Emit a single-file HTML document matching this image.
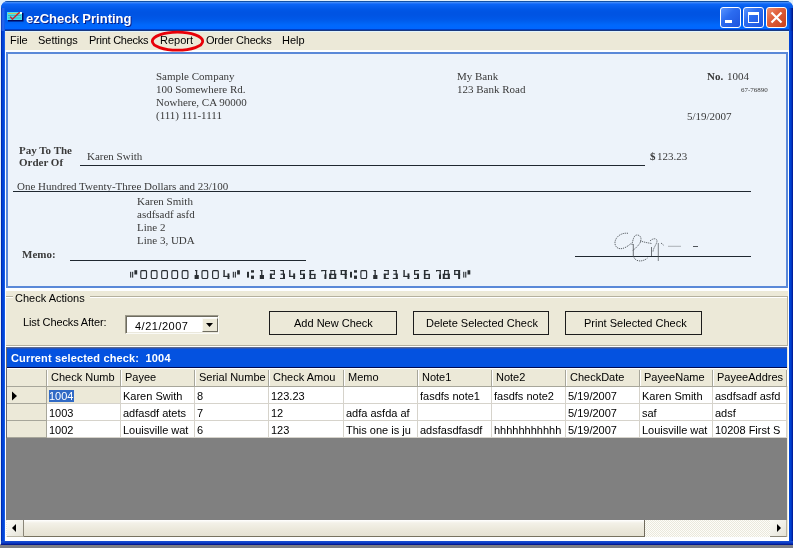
<!DOCTYPE html>
<html><head><meta charset="utf-8"><style>
*{margin:0;padding:0;box-sizing:border-box}
html,body{width:793px;height:548px;overflow:hidden}
body{position:relative;background:#E2F0FA;font-family:"Liberation Sans",sans-serif;font-size:11px;color:#000}
.a{position:absolute}
.t{position:absolute;white-space:pre;line-height:1;will-change:transform}
.sf{font-family:"Liberation Serif",serif;color:#3A3A3A;font-size:11px}
.b{font-weight:bold}
.hd{position:absolute;top:368px;height:18px;background:#ECE9D8}
.btn{position:absolute;top:311px;height:24px;border:1px solid #1C1C1C;background:#ECE9D8}
</style></head><body>
<!-- desktop strip bottom -->
<div class="a" style="left:0;top:545px;width:793px;height:3px;background:#7D7F86"></div>
<div class="a" style="left:0;top:544px;width:793px;height:1px;background:#8C88B0"></div>

<!-- window frame -->
<div class="a" style="left:1px;top:1px;width:792px;height:544px;background:linear-gradient(to right,#00138F 0,#0040D0 1px,#0048DC 3px,#2A6CF4 4px,#0048DC 5px,#0048DC 787px,#0040D0 790px,#00138F 792px);border-radius:7px 7px 0 0"></div>
<div class="a" style="left:1px;top:541px;width:792px;height:4px;background:linear-gradient(to bottom,#1A4ED0 0,#0A3CC8 2px,#000E80 4px)"></div>
<!-- title bar -->
<div class="a" style="left:1px;top:1px;width:792px;height:30px;border-radius:7px 7px 0 0;background:linear-gradient(to bottom,#1050A8 0,#1050A8 1px,#3D8AF8 1px,#3D8AF8 2px,#2070F8 2px,#2070F8 3px,#0A68F8 3px,#0860F0 5px,#0058E8 8px,#0054E3 11px,#0054E3 14px,#0058E8 18px,#0060F0 21px,#0068FC 24px,#0066FF 28px,#0040C8 28px,#0040C8 29px,#1A3A80 29px,#1A3A80 30px)"></div>
<div class="a" style="left:5px;top:31px;width:784px;height:1px;background:#E0F4FF"></div>
<div class="a" style="left:1px;top:8px;width:4px;height:23px;background:linear-gradient(to right,#0A2AA0 0,#1E5AE0 1px,#2A6AF0 2px,#0A58E8 4px)"></div>
<div class="a" style="left:789px;top:8px;width:4px;height:23px;background:linear-gradient(to right,#0A50E0 0,#0038C0 2px,#002098 3px,#001480 4px)"></div>
<!-- title icon -->
<svg class="a" style="left:6px;top:11px" width="18" height="11" viewBox="0 0 18 11">
  <rect x="2" y="2" width="15.5" height="8.5" fill="#000A60"/>
  <rect x="1" y="1" width="15" height="8" fill="#48E0EC"/>
  <rect x="2" y="2" width="12" height="1" fill="#C8C060"/>
  <rect x="2" y="4" width="13" height="1" fill="#38B8C0"/>
  <rect x="2" y="6.5" width="13" height="1" fill="#38B8C0"/>
  <rect x="14" y="1" width="2" height="2" fill="#E8FFFF"/>
  <path d="M4.2 5.6 L6.4 8.2 L13.6 1.3" stroke="#C82030" stroke-width="1.4" fill="none"/>
</svg>
<div class="t b" style="left:26px;top:12px;font-size:13px;color:#fff;text-shadow:1px 1px 0 #0A1F8A">ezCheck Printing</div>

<!-- title buttons -->
<div class="a" style="left:720px;top:7px;width:21px;height:21px;border:1px solid #fff;border-radius:3px;background:linear-gradient(135deg,#5A95FF 0,#2C6CF0 40%,#1D54DE 100%)"></div>
<div class="a" style="left:725px;top:20px;width:7px;height:3px;background:#fff"></div>
<div class="a" style="left:743px;top:7px;width:21px;height:21px;border:1px solid #fff;border-radius:3px;background:linear-gradient(135deg,#5A95FF 0,#2C6CF0 40%,#1D54DE 100%)"></div>
<div class="a" style="left:748px;top:12px;width:11px;height:11px;border:1px solid #fff;border-top-width:3px"></div>
<div class="a" style="left:766px;top:7px;width:21px;height:21px;border:1px solid #fff;border-radius:3px;background:linear-gradient(135deg,#F09070 0,#E0603C 40%,#C8401C 100%)"></div>
<svg class="a" style="left:766px;top:7px" width="21" height="21" viewBox="0 0 21 21"><path d="M5.5 5.5 L15.5 15.5 M15.5 5.5 L5.5 15.5" stroke="#fff" stroke-width="2.2"/></svg>

<!-- client area -->
<div class="a" style="left:5px;top:32px;width:784px;height:509px;background:#ECE9D8"></div>
<div class="a" style="left:5px;top:50px;width:784px;height:491px;background:#FDFEFF"></div>
<div class="a" style="left:6px;top:291px;width:782px;height:246px;background:#ECE9D8"></div>
<!-- menu -->
<div class="t" style="left:10px;top:35px">File</div>
<div class="t" style="left:38px;top:35px">Settings</div>
<div class="t" style="left:89px;top:35px;letter-spacing:-0.25px">Print Checks</div>
<div class="t" style="left:160px;top:35px">Report</div>
<div class="t" style="left:206px;top:35px;letter-spacing:-0.2px">Order Checks</div>
<div class="t" style="left:282px;top:35px">Help</div>
<svg class="a" style="left:150px;top:30px" width="56" height="22" viewBox="0 0 56 22"><ellipse cx="27.5" cy="11.2" rx="25.2" ry="9" fill="none" stroke="#E80008" stroke-width="2.8"/></svg>

<!-- check panel -->
<div class="a" style="left:6px;top:52px;width:782px;height:236px;border:2px solid #5A88D8;background:#EDF3FA"></div>
<div class="t sf" style="left:156px;top:71px">Sample Company</div>
<div class="t sf" style="left:156px;top:84px">100 Somewhere Rd.</div>
<div class="t sf" style="left:156px;top:97px">Nowhere, CA 90000</div>
<div class="t sf" style="left:156px;top:110px">(111) 111-1111</div>
<div class="t sf" style="left:457px;top:71px">My Bank</div>
<div class="t sf" style="left:457px;top:84px">123 Bank Road</div>
<div class="t sf b" style="left:707px;top:71px">No.</div>
<div class="t sf" style="left:727px;top:71px">1004</div>
<div class="t sf" style="left:741px;top:87px;font-size:7px">67-76890</div>
<div class="t sf" style="left:687px;top:111px">5/19/2007</div>
<div class="t sf b" style="left:19px;top:145px">Pay To The</div>
<div class="t sf b" style="left:19px;top:157px">Order Of</div>
<div class="t sf" style="left:87px;top:151px">Karen Swith</div>
<div class="a" style="left:80px;top:165px;width:565px;height:1px;background:#202830"></div>
<div class="t sf b" style="left:650px;top:151px">$</div>
<div class="t sf" style="left:656.5px;top:151px">123.23</div>
<div class="t sf" style="left:17px;top:181px">One Hundred Twenty-Three Dollars and 23/100</div>
<div class="a" style="left:13px;top:191px;width:738px;height:1px;background:#202830"></div>
<div class="t sf" style="left:137px;top:196px">Karen Smith</div>
<div class="t sf" style="left:137px;top:209px">asdfsadf asfd</div>
<div class="t sf" style="left:137px;top:222px">Line 2</div>
<div class="t sf" style="left:137px;top:235px">Line 3, UDA</div>
<div class="t sf b" style="left:22px;top:249px">Memo:</div>
<div class="a" style="left:70px;top:260px;width:236px;height:1px;background:#202830"></div>
<div class="a" style="left:575px;top:256px;width:176px;height:1px;background:#202830"></div>

<!-- sig --><svg class="a" style="left:600px;top:225px" width="110" height="40" viewBox="600 225 110 40"><g fill="none" stroke="#4A4F55" stroke-width="0.9" stroke-dasharray="1.2 0.9">
<path d="M628,233.3 C622,232.5 616,236 615,242 C614.5,247.5 619,250 624,248 C628,246.5 630,244 632,243"/>
<path d="M632,245 C633,239 634,235 637,235 C641,235 642,239 640,243 C638,246 635,249 632.5,250.5"/>
<path d="M633.3,244 L633.3,257" stroke-dasharray="none" stroke-width="0.8"/>
<path d="M640,241 L646,242.5 L651.5,243.5"/>
<path d="M650,241 C653,238 657,238 657,241 C657,244 653,248 653,252"/>
<path d="M651.5,247 L651.5,256" stroke-dasharray="none" stroke-width="0.8"/>
<path d="M634,257.5 C636,262 643,262 647.5,258"/>
<path d="M658.3,243 L658.3,261" stroke-dasharray="none" stroke-width="0.7"/>
<path d="M661,243 L664,245.5"/>
</g>
<path d="M668,246.3 L681,246.3" stroke="#9AA0A6" stroke-width="0.8"/>
<path d="M693,246.5 L698,246.5" stroke="#50555A" stroke-width="1"/>
</svg><!-- /sig -->
<!-- micr --><svg class="a" style="left:125px;top:270px" width="355" height="9" viewBox="0 0 355 9"><g fill="#2A2F33"><rect x="5.1" y="1.8" width="1.1" height="5.8"/><rect x="7.1" y="1.8" width="1.1" height="5.8"/><rect x="9.4" y="0.2" width="2.8" height="4.3"/><rect x="15.8" y="0.55" width="5.7" height="7.9" rx="1.2" fill="none" stroke="#2A2F33" stroke-width="1.15"/><rect x="26.3" y="0.55" width="5.7" height="7.9" rx="1.2" fill="none" stroke="#2A2F33" stroke-width="1.15"/><rect x="36.7" y="0.55" width="5.7" height="7.9" rx="1.2" fill="none" stroke="#2A2F33" stroke-width="1.15"/><rect x="46.9" y="0.55" width="5.7" height="7.9" rx="1.2" fill="none" stroke="#2A2F33" stroke-width="1.15"/><rect x="57.2" y="0.55" width="5.7" height="7.9" rx="1.2" fill="none" stroke="#2A2F33" stroke-width="1.15"/><rect x="70.0" y="0.0" width="2.2" height="1.1"/><rect x="70.9" y="0.0" width="1.3" height="5.5"/><rect x="69.6" y="5.0" width="4.2" height="4.0"/><rect x="77.0" y="0.55" width="5.7" height="7.9" rx="1.2" fill="none" stroke="#2A2F33" stroke-width="1.15"/><rect x="87.6" y="0.55" width="5.7" height="7.9" rx="1.2" fill="none" stroke="#2A2F33" stroke-width="1.15"/><rect x="98.4" y="0.0" width="1.4" height="7.0"/><rect x="98.4" y="5.8" width="6.0" height="1.2"/><rect x="102.5" y="3.4" width="1.9" height="5.6"/><rect x="107.8" y="1.8" width="1.1" height="5.8"/><rect x="109.8" y="1.8" width="1.1" height="5.8"/><rect x="112.1" y="0.2" width="2.8" height="4.3"/><rect x="122.0" y="1.8" width="2.0" height="5.8"/><rect x="126.0" y="0.2" width="3.0" height="2.4"/><rect x="126.0" y="5.6" width="3.0" height="3.3"/><rect x="135.2" y="0.0" width="2.2" height="1.1"/><rect x="136.1" y="0.0" width="1.3" height="5.5"/><rect x="134.8" y="5.0" width="4.2" height="4.0"/><rect x="145.1" y="0.0" width="4.8" height="1.1"/><rect x="148.8" y="0.0" width="1.1" height="4.6"/><rect x="144.9" y="3.7" width="5.0" height="1.2"/><rect x="144.9" y="3.7" width="2.0" height="5.3"/><rect x="144.9" y="7.9" width="5.0" height="1.1"/><rect x="155.3" y="0.0" width="3.7" height="1.1"/><rect x="157.8" y="0.0" width="1.2" height="4.5"/><rect x="155.6" y="3.6" width="3.4" height="1.2"/><rect x="158.0" y="3.6" width="2.0" height="5.4"/><rect x="155.0" y="7.9" width="5.0" height="1.1"/><rect x="164.1" y="0.0" width="1.4" height="7.0"/><rect x="164.1" y="5.8" width="6.0" height="1.2"/><rect x="168.2" y="3.4" width="1.9" height="5.6"/><rect x="175.0" y="0.0" width="5.0" height="1.1"/><rect x="175.0" y="0.0" width="1.2" height="4.6"/><rect x="175.0" y="3.7" width="4.8" height="1.2"/><rect x="178.0" y="3.7" width="2.0" height="5.3"/><rect x="175.0" y="7.9" width="5.0" height="1.1"/><rect x="184.5" y="0.0" width="1.6" height="9.0"/><rect x="184.5" y="0.0" width="4.6" height="1.1"/><rect x="184.5" y="3.9" width="6.0" height="1.2"/><rect x="189.1" y="3.9" width="1.4" height="5.1"/><rect x="184.5" y="7.9" width="6.0" height="1.1"/><rect x="196.4" y="0.0" width="5.0" height="1.1"/><rect x="196.4" y="0.0" width="0.9" height="1.6"/><rect x="200.0" y="0.0" width="1.2" height="5.0"/><rect x="199.4" y="4.4" width="2.0" height="4.6"/><rect x="205.4" y="0.0" width="4.8" height="1.1"/><rect x="205.4" y="0.0" width="1.1" height="4.6"/><rect x="209.1" y="0.0" width="1.1" height="4.6"/><rect x="204.2" y="3.8" width="7.0" height="1.3"/><rect x="204.2" y="3.8" width="2.0" height="5.2"/><rect x="209.2" y="3.8" width="2.0" height="5.2"/><rect x="204.2" y="7.8" width="7.0" height="1.2"/><rect x="215.7" y="0.0" width="6.0" height="1.1"/><rect x="215.7" y="0.0" width="1.3" height="4.8"/><rect x="215.7" y="3.8" width="6.0" height="1.2"/><rect x="219.7" y="0.0" width="2.0" height="9.0"/><rect x="225.0" y="1.8" width="2.0" height="5.8"/><rect x="229.0" y="0.2" width="3.0" height="2.4"/><rect x="229.0" y="5.6" width="3.0" height="3.3"/><rect x="235.9" y="0.55" width="5.7" height="7.9" rx="1.2" fill="none" stroke="#2A2F33" stroke-width="1.15"/><rect x="248.6" y="0.0" width="2.2" height="1.1"/><rect x="249.5" y="0.0" width="1.3" height="5.5"/><rect x="248.2" y="5.0" width="4.2" height="4.0"/><rect x="259.0" y="0.0" width="4.8" height="1.1"/><rect x="262.7" y="0.0" width="1.1" height="4.6"/><rect x="258.8" y="3.7" width="5.0" height="1.2"/><rect x="258.8" y="3.7" width="2.0" height="5.3"/><rect x="258.8" y="7.9" width="5.0" height="1.1"/><rect x="268.1" y="0.0" width="3.7" height="1.1"/><rect x="270.6" y="0.0" width="1.2" height="4.5"/><rect x="268.4" y="3.6" width="3.4" height="1.2"/><rect x="270.8" y="3.6" width="2.0" height="5.4"/><rect x="267.8" y="7.9" width="5.0" height="1.1"/><rect x="278.4" y="0.0" width="1.4" height="7.0"/><rect x="278.4" y="5.8" width="6.0" height="1.2"/><rect x="282.5" y="3.4" width="1.9" height="5.6"/><rect x="289.0" y="0.0" width="5.0" height="1.1"/><rect x="289.0" y="0.0" width="1.2" height="4.6"/><rect x="289.0" y="3.7" width="4.8" height="1.2"/><rect x="292.0" y="3.7" width="2.0" height="5.3"/><rect x="289.0" y="7.9" width="5.0" height="1.1"/><rect x="298.9" y="0.0" width="1.6" height="9.0"/><rect x="298.9" y="0.0" width="4.6" height="1.1"/><rect x="298.9" y="3.9" width="6.0" height="1.2"/><rect x="303.5" y="3.9" width="1.4" height="5.1"/><rect x="298.9" y="7.9" width="6.0" height="1.1"/><rect x="311.0" y="0.0" width="5.0" height="1.1"/><rect x="311.0" y="0.0" width="0.9" height="1.6"/><rect x="314.6" y="0.0" width="1.2" height="5.0"/><rect x="314.0" y="4.4" width="2.0" height="4.6"/><rect x="319.0" y="0.0" width="4.8" height="1.1"/><rect x="319.0" y="0.0" width="1.1" height="4.6"/><rect x="322.7" y="0.0" width="1.1" height="4.6"/><rect x="317.8" y="3.8" width="7.0" height="1.3"/><rect x="317.8" y="3.8" width="2.0" height="5.2"/><rect x="322.8" y="3.8" width="2.0" height="5.2"/><rect x="317.8" y="7.8" width="7.0" height="1.2"/><rect x="329.1" y="0.0" width="6.0" height="1.1"/><rect x="329.1" y="0.0" width="1.3" height="4.8"/><rect x="329.1" y="3.8" width="6.0" height="1.2"/><rect x="333.1" y="0.0" width="2.0" height="9.0"/><rect x="338.2" y="1.8" width="1.1" height="5.8"/><rect x="340.2" y="1.8" width="1.1" height="5.8"/><rect x="342.5" y="0.2" width="2.8" height="4.3"/></g></svg><!-- /micr -->
<!-- group -->
<div class="a" style="left:6px;top:296px;width:782px;height:1px;background:#B4B09E"></div>
<div class="a" style="left:6px;top:297px;width:782px;height:1px;background:#fff"></div>
<div class="a" style="left:6px;top:345px;width:782px;height:1px;background:#B4B09E"></div>
<div class="a" style="left:787px;top:296px;width:1px;height:50px;background:#B4B09E"></div>
<div class="a" style="left:6px;top:346px;width:782px;height:1px;background:#fff"></div>
<div class="t" style="left:13px;top:293px;background:#ECE9D8;padding:0 5px 0 2px">Check Actions</div>
<div class="t" style="left:23px;top:317px;letter-spacing:-0.12px">List Checks After:</div>
<div class="a" style="left:125px;top:315px;width:94px;height:19px;background:#fff;border:1px solid;border-color:#9D9A8A #FAFAF6 #FAFAF6 #9D9A8A;box-shadow:inset 1px 1px 0 #6E6C60,inset -1px -1px 0 #EAE8DC"></div>
<div class="t" style="left:135px;top:321px;letter-spacing:0.5px">4/21/2007</div>
<div class="a" style="left:202px;top:318px;width:16px;height:14px;background:#ECE9D8;border:1px solid;border-color:#FAFAF6 #6E6C60 #6E6C60 #FAFAF6"></div>
<svg class="a" style="left:206px;top:323px" width="8" height="5"><path d="M0 0 H7 L3.5 4 Z" fill="#000"/></svg>
<div class="btn" style="left:269px;width:128px"></div>
<div class="t" style="left:294px;top:318px">Add New Check</div>
<div class="btn" style="left:413px;width:136px"></div>
<div class="t" style="left:426px;top:318px">Delete Selected Check</div>
<div class="btn" style="left:565px;width:137px"></div>
<div class="t" style="left:584px;top:318px">Print Selected Check</div>

<!-- caption bar -->
<div class="a" style="left:6px;top:347px;width:781px;height:21px;background:#0452E0;border-top:1px solid #5A6A90;border-left:1px solid #5A6A90;border-bottom:1px solid #000A50;box-shadow:inset 0 1px 0 #2A54B8"></div>
<div class="t b" style="left:11px;top:353px;color:#fff;letter-spacing:0.15px">Current selected check:  1004</div>

<!-- grid -->
<div class="a" style="left:6px;top:368px;width:781px;height:70px;background:#fff"></div>
<div id="grid">
<div class="a" style="left:6px;top:368px;width:781px;height:19px;background:#ECE9D8;border-top:1px solid #fff;border-bottom:1px solid #A7A69A"></div>
<div class="a" style="left:6px;top:387px;width:40px;height:51px;background:#ECE9D8"></div>
<div class="a" style="left:47px;top:387px;width:73px;height:16px;background:#ECE9D8"></div>
<div class="a" style="left:46px;top:370px;width:1px;height:16px;background:#A7A69A"></div>
<div class="a" style="left:47px;top:370px;width:1px;height:16px;background:#fff"></div>
<div class="a" style="left:120px;top:370px;width:1px;height:16px;background:#A7A69A"></div>
<div class="a" style="left:121px;top:370px;width:1px;height:16px;background:#fff"></div>
<div class="a" style="left:194px;top:370px;width:1px;height:16px;background:#A7A69A"></div>
<div class="a" style="left:195px;top:370px;width:1px;height:16px;background:#fff"></div>
<div class="a" style="left:268px;top:370px;width:1px;height:16px;background:#A7A69A"></div>
<div class="a" style="left:269px;top:370px;width:1px;height:16px;background:#fff"></div>
<div class="a" style="left:343px;top:370px;width:1px;height:16px;background:#A7A69A"></div>
<div class="a" style="left:344px;top:370px;width:1px;height:16px;background:#fff"></div>
<div class="a" style="left:417px;top:370px;width:1px;height:16px;background:#A7A69A"></div>
<div class="a" style="left:418px;top:370px;width:1px;height:16px;background:#fff"></div>
<div class="a" style="left:491px;top:370px;width:1px;height:16px;background:#A7A69A"></div>
<div class="a" style="left:492px;top:370px;width:1px;height:16px;background:#fff"></div>
<div class="a" style="left:565px;top:370px;width:1px;height:16px;background:#A7A69A"></div>
<div class="a" style="left:566px;top:370px;width:1px;height:16px;background:#fff"></div>
<div class="a" style="left:639px;top:370px;width:1px;height:16px;background:#A7A69A"></div>
<div class="a" style="left:640px;top:370px;width:1px;height:16px;background:#fff"></div>
<div class="a" style="left:712px;top:370px;width:1px;height:16px;background:#A7A69A"></div>
<div class="a" style="left:713px;top:370px;width:1px;height:16px;background:#fff"></div>
<div class="a" style="left:786px;top:370px;width:1px;height:16px;background:#A7A69A"></div>
<div class="a" style="left:787px;top:370px;width:1px;height:16px;background:#fff"></div>
<div class="a" style="left:46px;top:403px;width:741px;height:1px;background:#D6D3CB"></div>
<div class="a" style="left:6px;top:403px;width:40px;height:1px;background:#A7A69A"></div>
<div class="a" style="left:46px;top:420px;width:741px;height:1px;background:#D6D3CB"></div>
<div class="a" style="left:6px;top:420px;width:40px;height:1px;background:#A7A69A"></div>
<div class="a" style="left:46px;top:437px;width:741px;height:1px;background:#D6D3CB"></div>
<div class="a" style="left:6px;top:437px;width:40px;height:1px;background:#A7A69A"></div>
<div class="a" style="left:46px;top:387px;width:1px;height:51px;background:#D6D3CB"></div>
<div class="a" style="left:120px;top:387px;width:1px;height:51px;background:#D6D3CB"></div>
<div class="a" style="left:194px;top:387px;width:1px;height:51px;background:#D6D3CB"></div>
<div class="a" style="left:268px;top:387px;width:1px;height:51px;background:#D6D3CB"></div>
<div class="a" style="left:343px;top:387px;width:1px;height:51px;background:#D6D3CB"></div>
<div class="a" style="left:417px;top:387px;width:1px;height:51px;background:#D6D3CB"></div>
<div class="a" style="left:491px;top:387px;width:1px;height:51px;background:#D6D3CB"></div>
<div class="a" style="left:565px;top:387px;width:1px;height:51px;background:#D6D3CB"></div>
<div class="a" style="left:639px;top:387px;width:1px;height:51px;background:#D6D3CB"></div>
<div class="a" style="left:712px;top:387px;width:1px;height:51px;background:#D6D3CB"></div>
<div class="a" style="left:786px;top:387px;width:1px;height:51px;background:#D6D3CB"></div>
<div class="a" style="left:46px;top:387px;width:1px;height:51px;background:#A7A69A"></div>
<div class="t" style="left:51px;top:372px;width:68px;overflow:hidden">Check Numb</div>
<div class="t" style="left:125px;top:372px;width:68px;overflow:hidden">Payee</div>
<div class="t" style="left:199px;top:372px;width:68px;overflow:hidden">Serial Numbe</div>
<div class="t" style="left:273px;top:372px;width:69px;overflow:hidden">Check Amou</div>
<div class="t" style="left:348px;top:372px;width:68px;overflow:hidden">Memo</div>
<div class="t" style="left:422px;top:372px;width:68px;overflow:hidden">Note1</div>
<div class="t" style="left:496px;top:372px;width:68px;overflow:hidden">Note2</div>
<div class="t" style="left:570px;top:372px;width:68px;overflow:hidden">CheckDate</div>
<div class="t" style="left:644px;top:372px;width:67px;overflow:hidden">PayeeName</div>
<div class="t" style="left:717px;top:372px;width:68px;overflow:hidden">PayeeAddres</div>
<div class="a" style="left:49px;top:390px;width:25px;height:12px;background:#316AC5"></div>
<div class="t" style="left:49px;top:391px;color:#fff">1004</div>
<div class="t" style="left:123px;top:391px;width:71px;overflow:hidden">Karen Swith</div>
<div class="t" style="left:197px;top:391px;width:71px;overflow:hidden">8</div>
<div class="t" style="left:271px;top:391px;width:72px;overflow:hidden">123.23</div>
<div class="t" style="left:420px;top:391px;width:71px;overflow:hidden">fasdfs note1</div>
<div class="t" style="left:494px;top:391px;width:71px;overflow:hidden">fasdfs note2</div>
<div class="t" style="left:568px;top:391px;width:71px;overflow:hidden">5/19/2007</div>
<div class="t" style="left:642px;top:391px;width:70px;overflow:hidden">Karen Smith</div>
<div class="t" style="left:715px;top:391px;width:71px;overflow:hidden">asdfsadf asfd</div>
<div class="t" style="left:49px;top:408px;width:71px;overflow:hidden">1003</div>
<div class="t" style="left:123px;top:408px;width:71px;overflow:hidden">adfasdf atets</div>
<div class="t" style="left:197px;top:408px;width:71px;overflow:hidden">7</div>
<div class="t" style="left:271px;top:408px;width:72px;overflow:hidden">12</div>
<div class="t" style="left:346px;top:408px;width:71px;overflow:hidden">adfa asfda af</div>
<div class="t" style="left:568px;top:408px;width:71px;overflow:hidden">5/19/2007</div>
<div class="t" style="left:642px;top:408px;width:70px;overflow:hidden">saf</div>
<div class="t" style="left:715px;top:408px;width:71px;overflow:hidden">adsf</div>
<div class="t" style="left:49px;top:425px;width:71px;overflow:hidden">1002</div>
<div class="t" style="left:123px;top:425px;width:71px;overflow:hidden">Louisville wat</div>
<div class="t" style="left:197px;top:425px;width:71px;overflow:hidden">6</div>
<div class="t" style="left:271px;top:425px;width:72px;overflow:hidden">123</div>
<div class="t" style="left:346px;top:425px;width:71px;overflow:hidden">This one is ju</div>
<div class="t" style="left:420px;top:425px;width:71px;overflow:hidden">adsfasdfasdf</div>
<div class="t" style="left:494px;top:425px;width:71px;overflow:hidden">hhhhhhhhhhh</div>
<div class="t" style="left:568px;top:425px;width:71px;overflow:hidden">5/19/2007</div>
<div class="t" style="left:642px;top:425px;width:70px;overflow:hidden">Louisville wat</div>
<div class="t" style="left:715px;top:425px;width:71px;overflow:hidden">10208 First S</div>
<svg class="a" style="left:11px;top:391px" width="7" height="10"><path d="M1 0.5 V9.5 L6 5 Z" fill="#000"/></svg>
</div>

<div class="a" style="left:6px;top:347px;width:1px;height:91px;background:#6A6A72"></div>
<!-- gray area -->
<div class="a" style="left:6px;top:438px;width:781px;height:82px;background:#808080"></div>
<!-- scrollbar -->
<div class="a" style="left:6px;top:520px;width:781px;height:17px;background:repeating-conic-gradient(#FDFDF8 0 25%,#EAE8DC 0 50%) 0 0/2px 2px"></div>
<div class="a" style="left:7px;top:520px;width:17px;height:17px;background:linear-gradient(135deg,#FBFBF6 0,#EEEDE5 60%,#E4E2D6 100%);border-right:1px solid #8A8678;border-bottom:1px solid #B8B4A4"></div>
<svg class="a" style="left:11px;top:524px" width="6" height="9"><path d="M5 0 V8 L1 4 Z" fill="#000"/></svg>
<div class="a" style="left:24px;top:520px;width:621px;height:17px;background:linear-gradient(to bottom,#fff 0,#F3F1E8 3px,#ECE9DC 9px,#E6E3D4 15px);border-right:1px solid #6F6A5C;border-bottom:1px solid #77725F"></div>
<div class="a" style="left:770px;top:520px;width:17px;height:17px;background:linear-gradient(135deg,#FBFBF6 0,#EEEDE5 60%,#E4E2D6 100%);border-bottom:1px solid #8A8678;border-right:1px solid #B8B4A4"></div>
<svg class="a" style="left:776px;top:524px" width="6" height="9"><path d="M1 0 V8 L5 4 Z" fill="#000"/></svg>
</body></html>
